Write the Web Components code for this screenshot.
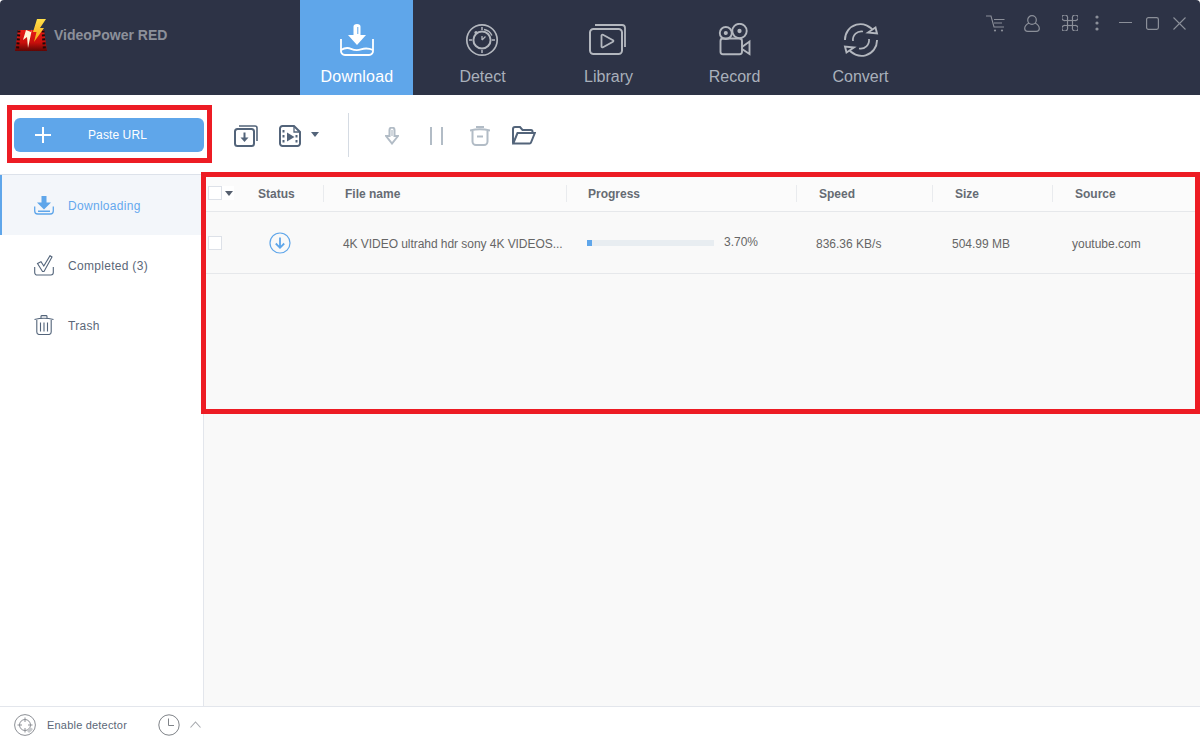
<!DOCTYPE html>
<html lang="en"><head><meta charset="utf-8"><title>VideoPower RED</title>
<style>
html,body{margin:0;padding:0;background:#fff}
body{font-family:"Liberation Sans",Arial,sans-serif;width:1200px;height:742px;overflow:hidden}
</style></head><body>
<vp-app></vp-app>
<script>
function def(name, html){
  customElements.define(name, class extends HTMLElement{
    constructor(){super();this.attachShadow({mode:'open'});}
    connectedCallback(){ this.shadowRoot.innerHTML=typeof html==='function'?html(this):html; }
  });
}
const ICONS={
 download:`<svg width="34" height="34" viewBox="0 0 34 34" fill="none" stroke="#fff" stroke-width="1.8"><path d="M1 16V27.5a4 4 0 0 0 4 4.5H29a4 4 0 0 0 4-4.5V16"/><path d="M1 27c4-2.5 7-2.5 10-1.2s6 2 10 .6 7-1.6 12 .6"/><path d="M13.500 3.500a3.500 2.500 0 0 1 7 0V12H26L17 22 8 12H13.500Z" fill="#fff" stroke="none"/><path d="M17.800 4V11" stroke="#5fa6ea" stroke-width="1"/></svg>`,
 detect:`<svg style="margin-left:-2px" width="34" height="34" viewBox="0 0 34 34" fill="none" stroke="#b3b7be" stroke-width="1.7"><circle cx="17" cy="17" r="15.200"/><circle cx="17" cy="17" r="8.600" stroke-width="2"/><path d="M17 4v3M17 27v3M4 17h3M27 17h3" stroke-width="1.500"/><path d="M17 17l3.500-3.500M17 17v-4M19 6.500a11 11 0 0 1 8 6" stroke-width="1.300"/><circle cx="11" cy="9.500" r="1.600" fill="#b3b7be" stroke="none"/></svg>`,
 library:`<svg style="margin-left:-2px" width="38" height="32" viewBox="0 0 38 32" fill="none" stroke="#b3b7be" stroke-width="1.8"><path d="M6 1H33a3 3 0 0 1 3 3V23"/><rect x="1" y="5" width="32" height="25" rx="3.500" stroke-width="2"/><path d="M12.500 11.500a1 1 0 0 1 1.500-.8l10 5.600a.8.800 0 0 1 0 1.400l-10 5.600a1 1 0 0 1-1.500-.8Z"/></svg>`,
 record:`<svg width="34" height="33" viewBox="0 0 34 33" fill="none" stroke="#b3b7be" stroke-width="1.900"><circle cx="7.800" cy="10" r="6"/><circle cx="7.800" cy="10" r="1.100" fill="#b3b7be"/><circle cx="21.500" cy="8" r="7.200"/><circle cx="21.500" cy="8" r="1.200" fill="#b3b7be"/><rect x="2.500" y="15.500" width="21.500" height="15.800" rx="2.500"/><path d="M24 24l7.500-5.500V31L24 26"/></svg>`,
 convert:`<svg width="36" height="34" viewBox="0 0 36 34" fill="none" stroke="#b3b7be" stroke-width="1.900"><path d="M2 17A15.500 15.500 0 0 1 31 9"/><path d="M34 17A15.500 15.500 0 0 1 5 25"/><path d="M10 18a8.500 8.500 0 0 1 10-9.500" stroke-width="1.700"/><path d="M26 16a8.500 8.500 0 0 1-10 9.500" stroke-width="1.700"/><path d="M25 9.500l9 1-1.500-6Z" fill="#2d3346"/><path d="M11 24.500l-9-1 1.500 6Z" fill="#2d3346"/></svg>`,
 cart:`<svg width="19" height="17" viewBox="0 0 19 17" fill="none" stroke="#8b8f99" stroke-width="1.100"><path d="M0 1H5L8 12H18"/><path d="M8 4.500H18.500M16 8H8"/><circle cx="9" cy="15.500" r="1.100" fill="#8b8f99" stroke="none"/><circle cx="16" cy="15.500" r="1.100" fill="#8b8f99" stroke="none"/></svg>`,
 user:`<svg width="16" height="17" viewBox="0 0 16 17" fill="none" stroke="#8b8f99" stroke-width="1.200"><circle cx="8" cy="5" r="4.300"/><path d="M5 8C2 9.500 .7 11 .7 13.500c0 2 1.300 2.800 3 2.800h8.600c1.700 0 3-.8 3-2.800C15.300 11 14 9.500 11 8"/></svg>`,
 cmd:`<svg width="16" height="16" viewBox="0 0 16 16" fill="none" stroke="#8b8f99" stroke-width="1.200"><rect x="5.500" y="5.500" width="5" height="5"/><path d="M5.500 5.500H3.500a2.900 2.900 0 1 1 2-2ZM10.500 5.500V3.500a2.900 2.900 0 1 1 2 2ZM10.500 10.500h2a2.900 2.900 0 1 1-2 2ZM5.500 10.500v2a2.900 2.900 0 1 1-2-2Z"/></svg>`,
 dots:`<svg width="6" height="16" viewBox="0 0 6 16" fill="#8b8f99"><circle cx="3" cy="2" r="1.600"/><circle cx="3" cy="8" r="1.600"/><circle cx="3" cy="14" r="1.600"/></svg>`,
 min:`<svg width="13" height="14" viewBox="0 0 13 14" stroke="#8b8f99" stroke-width="1.100"><path d="M0 6.500H13"/></svg>`,
 max:`<svg width="13" height="13" viewBox="0 0 13 13" fill="none" stroke="#8b8f99" stroke-width="1.200"><rect x=".6" y=".6" width="11.800" height="11.800" rx="1.800"/></svg>`,
 close:`<svg width="13" height="13" viewBox="0 0 13 13" stroke="#8b8f99" stroke-width="1.100"><path d="M.5.500l12 12M12.500.500l-12 12"/></svg>`,
 plus:`<svg width="16" height="16" viewBox="0 0 16 16" stroke="#fff" stroke-width="2"><path d="M8 0V16M0 8H16"/></svg>`,
 tbAdd:`<svg width="24" height="22" viewBox="0 0 24 22" fill="none" stroke="#53647a" stroke-width="2"><rect x="1" y="4" width="19" height="17" rx="2.500"/><path d="M5 1H21a2 2 0 0 1 2 2V16" stroke-width="1.600"/><path d="M10.500 7.500V14"/><path d="M6.500 12.500h8L10.500 17Z" fill="#53647a" stroke="none"/></svg>`,
 tbVideo:`<svg width="22" height="22" viewBox="0 0 22 22" fill="none" stroke="#53647a" stroke-width="2"><path d="M3.500 1H15L21 7V18.500A2.500 2.500 0 0 1 18.500 21H3.500A2.500 2.500 0 0 1 1 18.500V3.500A2.500 2.500 0 0 1 3.500 1Z"/><path d="M15 1V7H21" stroke-width="1.300"/><path d="M8 7.500l7.500 4.500L8 16.500Z" fill="#53647a" stroke="none"/><path d="M4.500 5v2.500M4.500 10v2.500M4.500 15v2.500M17.500 10v2.500M17.500 15v2.500"/></svg>`,
 tbDown:`<svg width="14" height="18" viewBox="0 0 14 18" fill="none" stroke="#b2bcc6" stroke-width="2"><path d="M4.500 9V3a2.500 2.500 0 0 1 5 0V9H13L7 16.500 1 9Z"/><path d="M7 3V9" stroke-width="1.200"/></svg>`,
 tbPause:`<svg width="13" height="18" viewBox="0 0 13 18" stroke="#b2bcc6" stroke-width="2"><path d="M1 0V18M12 0V18"/></svg>`,
 tbTrash:`<svg width="20" height="21" viewBox="0 0 20 21" fill="none" stroke="#b2bcc6" stroke-width="2"><path d="M0 5.500C6 4 14 4 20 5.500"/><path d="M6 2H14"/><path d="M2.500 6V16.500A3.500 3.500 0 0 0 6 20H14A3.500 3.500 0 0 0 17.500 16.500V6"/><path d="M7 11.500H13"/></svg>`,
 tbFolder:`<svg width="24" height="19" viewBox="0 0 24 19" fill="none" stroke="#53647a" stroke-width="2"><path d="M1 17V3a2 2 0 0 1 2-2H8l2.500 3H19a1.500 1.500 0 0 1 1.500 1.500V7"/><path d="M1.200 17.500L5.500 7H22.800L19 16.500a1.500 1.500 0 0 1-1.400 1H2Z"/></svg>`,
 sDown:`<svg width="20" height="20" viewBox="0 0 20 20" fill="none" stroke="#5fa6ea" stroke-width="1.300"><path d="M.7 11.500V16a3 3 0 0 0 3 3H16.300a3 3 0 0 0 3-3V11.500"/><path d="M7.500 1h5V7.500H17L10 14.500 3 7.500H7.500Z" fill="#5fa6ea" stroke="none"/><path d="M4 16.200H16" stroke-width="1.600"/></svg>`,
 sDone:`<svg width="20" height="21" viewBox="0 0 20 21" fill="none" stroke="#53647a" stroke-width="1.100"><path d="M.7 12V17.500a2.500 2.500 0 0 0 2.500 2.500H16.800a2.500 2.500 0 0 0 2.500-2.500V12"/><path d="M3.500 8.500L7 6.800 9.800 11 16 .7 18 2 10 16.500H8.500Z"/></svg>`,
 sTrash:`<svg width="20" height="20" viewBox="0 0 20 20" fill="none" stroke="#53647a" stroke-width="1.100"><path d="M.5 4.500C6 3 14 3 19.500 4.500"/><path d="M7 3.500V1.500C7 .8 7.500.6 8 .6H12C12.500.6 13 .8 13 1.500V3.500"/><path d="M2.800 5V17a2.500 2.500 0 0 0 2.500 2.500H14.700a2.500 2.500 0 0 0 2.500-2.500V5"/><path d="M6.500 7.500V16.500M10 7.500V16.500M13.500 7.500V16.500"/></svg>`,
 status:`<svg width="22" height="22" viewBox="0 0 22 22" fill="none" stroke="#5fa6ea" stroke-width="1.200"><circle cx="11" cy="11" r="10"/><path d="M11 5.500V15.500M6.800 11.500L11 15.800 15.200 11.500" stroke-width="1.800"/></svg>`,
 target:`<svg width="22" height="22" viewBox="0 0 22 22" fill="none" stroke="#8d9096"><circle cx="11" cy="11" r="10.400" stroke-width="1"/><circle cx="11" cy="11" r="5.500"/><path d="M11 3.500V8M11 14V18.500M3.500 11H8M14 11H18.500"/><path d="M15 19a9 9 0 0 0 4-4l-3-2-3 4Z" fill="#c8cacd" stroke="none"/></svg>`,
 clock:`<svg width="22" height="22" viewBox="0 0 22 22" fill="none" stroke="#7f8388" stroke-width="1"><circle cx="11" cy="11" r="10.200"/><path d="M10.500 4.500V11.500H16"/></svg>`,
 chev:`<svg width="11" height="7" viewBox="0 0 11 7" fill="none" stroke="#a5a8ad" stroke-width="1.100"><path d="M.5 6.500L5.500 1l5 5.500"/></svg>`,
 logo:`<svg width="34" height="34" viewBox="0 0 34 34"><defs><linearGradient id="r" x1="0" y1="0" x2="0" y2="1"><stop offset="0" stop-color="#e81c16"/><stop offset=".6" stop-color="#c70f0c"/><stop offset="1" stop-color="#5f0604"/></linearGradient><linearGradient id="y" x1="0" y1="0" x2="0" y2="1"><stop offset="0" stop-color="#ffe14a"/><stop offset="1" stop-color="#f4a014"/></linearGradient></defs><path d="M4 12H30L33 33H1Z" fill="url(#r)"/><path d="M5 12.500L3.500 32M29 12.500L30.500 32" stroke="#1d0a0a" stroke-width="3" stroke-dasharray="2 2"/><path d="M23 1H32L26 10H30L20 24 22.500 14H19Z" fill="url(#y)"/><path d="M12 12L17 14 18 11 14 30 13 19 9 22Z" fill="#fff4d8"/></svg>`
};
const ic=n=>ICONS[n];

def('vp-logo',`<style>:host{display:flex;align-items:center;width:300px;box-sizing:border-box;padding:0 0 0 14px;height:70px}
span{font:bold 14px "Liberation Sans",sans-serif;color:#8c909a;margin-left:6px}
.i{display:block;width:34px;height:34px}</style><div class="i">${ic('logo')}</div><span>VideoPower RED</span>`);

def('nav-tab',t=>`<style>:host{display:flex;flex-direction:column;align-items:center;width:113px;height:95px;box-sizing:border-box;padding-top:22px}
:host([active]){background:#5fa6ea}
.i{height:35px;display:flex;align-items:center;justify-content:center}
span{font:16px "Liberation Sans",sans-serif;color:#a9b0bb;margin-top:11px;line-height:18px}
:host([active]) span{color:#fff;letter-spacing:.2px;padding-left:1px}</style><div class="i"><slot></slot></div><span>${t.getAttribute('label')||''}</span>`);

def('win-controls',`<style>:host{display:flex;align-items:center;height:16px;margin-top:15px;padding-right:14px}
i{display:flex;align-items:center;justify-content:center;font-style:normal}
</style>
<i>${ic('cart')}</i><i style="margin-left:19px">${ic('user')}</i><i style="margin-left:22px">${ic('cmd')}</i><i style="margin-left:16px">${ic('dots')}</i><i style="margin-left:19px">${ic('min')}</i><i style="margin-left:14px">${ic('max')}</i><i style="margin-left:14px">${ic('close')}</i>`);

def('app-header',`<style>:host{display:flex;height:95px;background:#2d3346;flex:none}
nav{display:flex;gap:13px}
win-controls{margin-left:auto;align-self:flex-start}</style>
<vp-logo></vp-logo>
<nav>
<nav-tab label="Download" active>${ic('download')}</nav-tab>
<nav-tab label="Detect">${ic('detect')}</nav-tab>
<nav-tab label="Library">${ic('library')}</nav-tab>
<nav-tab label="Record">${ic('record')}</nav-tab>
<nav-tab label="Convert">${ic('convert')}</nav-tab>
</nav><win-controls></win-controls>`);

def('red-box',`<style>:host{display:block;position:absolute;border:5px solid #ed1c24;box-sizing:border-box;pointer-events:none;z-index:5}</style>`);

def('paste-button',`<style>:host{display:flex;align-items:center;width:190px;height:34px;background:#5fa6ea;border-radius:6px}
.p{display:flex;margin-left:21px}
span{font:12px "Liberation Sans",sans-serif;color:#fff;margin-left:37px;letter-spacing:.1px}</style><div class="p">${ic('plus')}</div><span>Paste URL</span>`);

def('tool-bar',`<style>:host{display:flex;align-items:center;height:79px;box-sizing:border-box;padding-left:14px;flex:none;background:#fff;position:relative}
.a{display:flex;align-items:center;margin-top:2px}
.sep{width:1px;height:44px;background:#d5dbe3;margin-left:29px}
.car{width:0;height:0;border:4px solid transparent;border-top:5px solid #53647a;border-bottom:0;margin-left:10px}
red-box{left:7px;top:10px;width:205px;height:58px}
</style>
<paste-button></paste-button>
<div class="a" style="margin-left:30px">${ic('tbAdd')}</div>
<div class="a" style="margin-left:21px">${ic('tbVideo')}</div>
<div class="car"></div><div class="sep"></div>
<div class="a" style="margin-left:36px">${ic('tbDown')}</div>
<div class="a" style="margin-left:31px">${ic('tbPause')}</div>
<div class="a" style="margin-left:27px">${ic('tbTrash')}</div>
<div class="a" style="margin-left:22px">${ic('tbFolder')}</div>
<red-box></red-box>`);

def('side-item',t=>`<style>:host{display:flex;align-items:center;height:60px;box-sizing:border-box;padding-left:34px;font:12px "Liberation Sans",sans-serif;color:#5b6778;letter-spacing:.3px}
:host([active]){background:#f3f6fa;color:#64a8ee;border-left:2px solid #5fa6ea;padding-left:32px}
.i{width:20px;display:flex;justify-content:center;margin-right:14px}
span{position:relative;top:1px}</style><div class="i"><slot></slot></div><span>${t.getAttribute('label')}</span>`);

def('side-nav',`<style>:host{display:block;width:204px;box-sizing:border-box;border-right:1px solid #e3e6ec;border-top:1px solid #dde2ea;background:#fff;flex:none}</style>
<side-item label="Downloading" active>${ic('sDown')}</side-item>
<side-item label="Completed (3)">${ic('sDone')}</side-item>
<side-item label="Trash">${ic('sTrash')}</side-item>`);

def('check-box',`<style>:host{display:block;width:14px;height:14px;box-sizing:border-box;border:1px solid #dde1e8;background:#fff}</style>`);

def('progress-cell',`<style>:host{display:flex;align-items:center;padding-left:21px;font:12px "Liberation Sans",sans-serif;color:#666}
.t{width:127px;height:6px;background:#e8edf1}.f{width:4.700px;height:6px;background:#5fa6ea}
span{margin-left:10px;position:relative;top:-1px}</style><div class="t"><div class="f"></div></div><span>3.70%</span>`);

const COLS='grid-template-columns:119px 243px 230px 136px 120px 1fr;';
def('table-head',`<style>:host{display:grid;${COLS}height:38px;box-sizing:border-box;border-bottom:1px solid #e6e8eb;background:#fbfbfb;font:bold 12px "Liberation Sans",sans-serif;color:#666b73;align-items:center;flex:none;padding-top:1px}
div{height:17px;line-height:19px;border-left:1px solid #e9ebee;box-sizing:border-box}
.first{border-left:0;display:flex;align-items:center;padding-left:4px;white-space:nowrap}
.c{width:12px;height:14px;background:#fff;display:flex;align-items:center;justify-content:flex-end;padding-right:1px;box-sizing:border-box;flex:none}
.c i{border:4px solid transparent;border-top:5px solid #555f6e;border-bottom:0}
check-box{flex:none}
.st{margin-left:24px;position:relative;top:1px}</style>
<div class="first"><check-box></check-box><span class="c"><i></i></span><span class="st">Status</span></div>
<div style="padding-left:21px">File name</div><div style="padding-left:21px">Progress</div><div style="padding-left:22px">Speed</div><div style="padding-left:22px">Size</div><div style="padding-left:22px">Source</div>`);

def('table-row',`<style>:host{display:grid;${COLS}height:62px;box-sizing:border-box;border-bottom:1px solid #e6e8eb;font:12px "Liberation Sans",sans-serif;color:#666;align-items:center;flex:none}
.f{display:flex;align-items:center;padding-left:4px;height:100%}
.s{display:flex;margin-left:47px}
.x{padding-top:2px}
.n{padding-left:20px;white-space:nowrap;letter-spacing:-.05px}</style>
<div class="f"><check-box></check-box><div class="s">${ic('status')}</div></div>
<div class="n x">4K VIDEO ultrahd hdr sony 4K VIDEOS...</div>
<progress-cell></progress-cell><div class="x" style="padding-left:20px">836.36 KB/s</div><div class="x" style="padding-left:20px">504.99 MB</div><div class="x" style="padding-left:20px">youtube.com</div>`);

def('download-table',`<style>:host{display:flex;flex-direction:column;flex:1;background:#f9f9f9;position:relative;min-width:0}
red-box{left:-3px;top:-2px;width:999px;height:242px}</style>
<table-head></table-head><table-row></table-row><red-box></red-box>`);

def('status-bar',`<style>:host{display:flex;align-items:center;height:36px;box-sizing:border-box;border-top:1px solid #e3e6ec;background:#fff;padding-left:14px;flex:none;font:11px "Liberation Sans",sans-serif;color:#5b6778;letter-spacing:.2px}
i{display:flex}span{margin-left:11px}</style>
<i>${ic('target')}</i><span>Enable detector</span><i style="margin-left:31px">${ic('clock')}</i><i style="margin-left:10px">${ic('chev')}</i>`);

def('vp-app',`<style>:host{display:flex;flex-direction:column;width:1200px;height:742px;overflow:hidden;border-radius:4px;background:#fff}
.m{display:flex;flex:1;min-height:0}</style>
<app-header></app-header><tool-bar></tool-bar>
<div class="m"><side-nav></side-nav><download-table></download-table></div>
<status-bar></status-bar>`);
</script>
</body></html>
